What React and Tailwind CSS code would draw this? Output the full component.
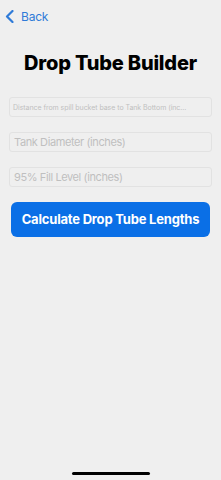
export default function App() {
  return (
    <div
      className="relative flex h-[480px] w-[221px] flex-col bg-[#efefef]"
      style={{ fontFamily: "Inter, 'Liberation Sans', sans-serif" }}
    >
      {/* Nav */}
      <div className="flex h-[32px] items-center pl-[5px] pt-[1px]">
        <svg width="9" height="13" viewBox="0 0 9 13" className="mr-[7px]">
          <path
            d="M7.5 1 L2 6.5 L7.5 12"
            fill="none"
            stroke="#2f7bd8"
            strokeWidth="2.2"
            strokeLinecap="round"
            strokeLinejoin="round"
          />
        </svg>
        <span className="text-[12px] leading-none tracking-[-0.2px] text-[#2f7bd8]">Back</span>
      </div>

      {/* Title */}
      <h1 className="mt-[19px] text-center text-[20px] font-extrabold leading-[24px] tracking-[-0.2px] text-black">
        Drop Tube Builder
      </h1>

      {/* Inputs */}
      <div className="mt-[22px] flex flex-col gap-[15px] px-[9px]">
        <input
          className="h-[20px] w-full rounded-[3px] border border-[#e2e2e2] bg-[#efefef] px-[3px] text-[7px] tracking-[-0.05px] outline-none placeholder:text-[#bfbfbf]"
          placeholder="Distance from spill bucket base to Tank Bottom (inc..."
        />
        <input
          className="h-[20px] w-full rounded-[3px] border border-[#e2e2e2] bg-[#efefef] px-[4px] text-[11px] tracking-[-0.4px] outline-none placeholder:text-[#bfbfbf]"
          placeholder="Tank Diameter (inches)"
        />
        <input
          className="h-[20px] w-full rounded-[3px] border border-[#e2e2e2] bg-[#efefef] px-[4px] text-[11px] tracking-[-0.4px] outline-none placeholder:text-[#bfbfbf]"
          placeholder="95% Fill Level (inches)"
        />
      </div>

      {/* Button */}
      <div className="mt-[15px] px-[11px]">
        <button className="flex h-[35px] w-full items-center justify-center rounded-[6px] bg-[#0a6fe6] text-[13px] font-bold tracking-[-0.2px] text-white">
          Calculate Drop Tube Lengths
        </button>
      </div>

      {/* Home indicator */}
      <div className="absolute bottom-[5px] left-[72px] h-[3px] w-[78px] rounded-full bg-black" />
    </div>
  );
}
